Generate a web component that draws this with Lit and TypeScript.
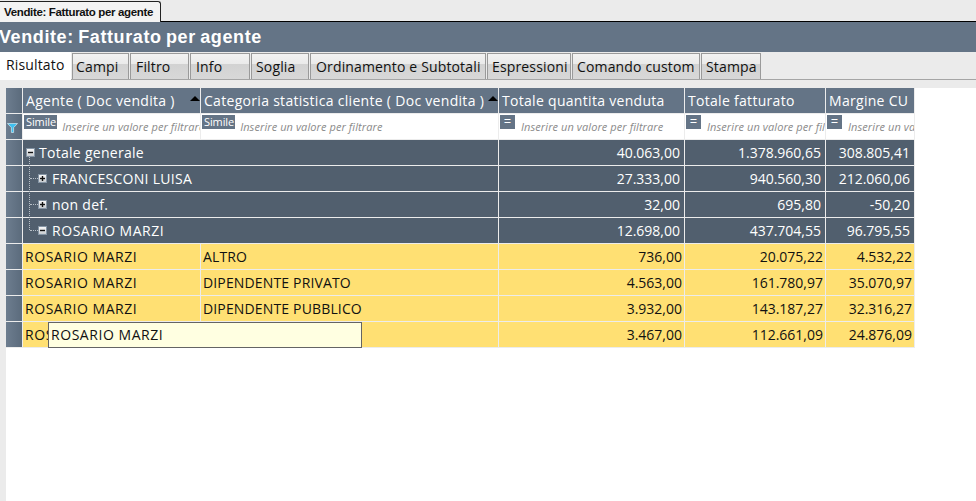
import { LitElement, html, css, svg } from "lit";
import { customElement } from "lit/decorators.js";

const tabs = [
  ["Campi", 57, 3], ["Filtro", 59, 5], ["Info", 60, 5], ["Soglia", 58, 4],
  ["Ordinamento e Subtotali", 176, 5], ["Espressioni", 84, 4], ["Comando custom", 128, 4], ["Stampa", 60, 4],
] as const;

const groups = [
  { level: 0, open: true, label: "Totale generale", v: ["40.063,00", "1.378.960,65", "308.805,41"] },
  { level: 1, open: false, label: "FRANCESCONI LUISA", v: ["27.333,00", "940.560,30", "212.060,06"] },
  { level: 1, open: false, label: "non def.", v: ["32,00", "695,80", "-50,20"] },
  { level: 1, open: true, label: "ROSARIO MARZI", v: ["12.698,00", "437.704,55", "96.795,55"], last: true },
];

const rows = [
  ["ROSARIO MARZI", "ALTRO", "736,00", "20.075,22", "4.532,22"],
  ["ROSARIO MARZI", "DIPENDENTE PRIVATO", "4.563,00", "161.780,97", "35.070,97"],
  ["ROSARIO MARZI", "DIPENDENTE PUBBLICO", "3.932,00", "143.187,27", "32.316,27"],
  ["ROSARIO MARZI", "", "3.467,00", "112.661,09", "24.876,09"],
];

@customElement("app-root")
export class AppRoot extends LitElement {
  static styles = css`
    :host { display: block; width: 976px; height: 501px; overflow: hidden; background: #ebebeb; font-family: "Open Sans", "Noto Sans", sans-serif; font-size: 14px; color: #111; }
    .doc-strip { height: 22px; box-sizing: border-box; border-bottom: 1px solid #000; padding-top: 1px; }
    .doc-tab { width: 161px; height: 21px; box-sizing: border-box; background: #f3f3f3; border: 1px solid #222; border-bottom: 0; border-left: 0; border-radius: 0 3px 0 0; font: bold 11.5px/21px "Liberation Sans", sans-serif; letter-spacing: -0.35px; padding-left: 4px; color: #111; white-space: nowrap; }
    .title { height: 30px; box-sizing: border-box; background: #647486; color: #fff; font: bold 18px/31px "Liberation Sans", sans-serif; letter-spacing: 0.6px; word-spacing: -1.2px; text-indent: -1px; white-space: nowrap; }
    .tabs { height: 28px; display: flex; gap: 1px; box-sizing: border-box; border-bottom: 1px solid #a5a5a5; }
    .tab { height: 26px; box-sizing: border-box; margin-top: 1px; border: 1px solid #9a9a9a; border-bottom: 0; white-space: nowrap; line-height: 25px; letter-spacing: 0.15px; color: #111; background: linear-gradient(#f2f2f2 0, #eaeaea 40%, #d2d2d2 42%, #d8d8d8 100%); }
    .tab.active { width: 71px; height: 28px; margin: 0; border: 0; background: #fff; padding-left: 6px; line-height: 26px; position: relative; z-index: 1; }
    .content { height: 421px; margin: 0 0 0 6px; box-sizing: border-box; border-top: 8px solid #ebebeb; background: #fff; position: relative; }
    .grid { display: inline-grid; grid-template-columns: 16px 177px 297px 185px 140px 88px; grid-auto-rows: 25px; gap: 1px; background: #ececec; padding: 0 1px 1px 0; }
    .cell { line-height: 25px; white-space: nowrap; overflow: hidden; padding: 0 3px; box-sizing: border-box; }
    .head { background: #647486; color: #fff; display: flex; align-items: center; justify-content: space-between; padding-left: 3px; padding-right: 0; letter-spacing: 0.3px; }
    .sort { width: 0; height: 0; border: 5px solid transparent; border-top: 0; border-bottom: 5px solid #000; flex: none; position: relative; top: -2px; }
    .sel { background: linear-gradient(90deg, #6d7d8f, #5b6b7c); display: flex; align-items: flex-start; justify-content: flex-start; }
    .funnel { margin: 9px 0 0 1px; }
    .fill { background: #fff; padding: 0; display: flex; align-items: flex-start; gap: 6px; overflow: hidden; }
    .fill.like { gap: 5px; }
    .op { flex: none; background: #647486; color: #fff; font-size: 11px; line-height: 13px; height: 14px; padding: 0 1px 0 2px; margin: 1px 0 0 1px; letter-spacing: -0.1px; }
    .op.eq { width: 15px; text-align: center; padding: 0; font-size: 13px; }
    .hint { font-style: italic; font-size: 11px; letter-spacing: 0.08px; color: #8a8a8a; line-height: 26px; white-space: nowrap; }
    .group { background: #515f6e; color: #fff; }
    .span2 { grid-column: span 2; display: flex; align-items: center; padding: 0; position: relative; overflow: visible; letter-spacing: 0.28px; }
    .num { text-align: right; padding-right: 2px; padding-left: 0; }
    .dark-num { padding-right: 4px; }
    .row { background: #ffe073; color: #111; padding-left: 2px; letter-spacing: 0.15px; }
    .row.num { letter-spacing: 0; }
    .wide { letter-spacing: 0.55px; }
    .exp { width: 9px; height: 9px; flex: none; background: linear-gradient(#f8f8f8, #c8ccd0); border: 1px solid #8595a5; box-sizing: border-box; display: block; position: relative; z-index: 1; }
    .exp svg { display: block; }
    .lbl { margin-left: 4px; }
    .l0 { padding-left: 3px; }
    .l1 { padding-left: 15px; }
    .l1 .lbl { margin-left: 5px; }
    .vline { position: absolute; left: 6px; width: 0; border-left: 1px dotted #b8c0c8; }
    .hline { position: absolute; left: 7px; top: 12px; width: 8px; border-top: 1px dotted #b8c0c8; }
    .tip { position: absolute; left: 42px; top: 234px; width: 314px; height: 26px; box-sizing: border-box; background: #ffffe1; border: 1px solid #646464; padding-left: 2px; line-height: 24px; color: #111; letter-spacing: 0.55px; }
  `;

  private expander(open: boolean) {
    return html`<span class="exp"><svg width="7" height="7" viewBox="0 0 7 7">
      ${svg`<path d="M1 3.5H6" stroke="#111" stroke-width="1.4"/>`}
      ${open ? "" : svg`<path d="M3.5 1V6" stroke="#111" stroke-width="1.4"/>`}
    </svg></span>`;
  }

  private funnel() {
    return html`<svg class="funnel" width="11" height="10" viewBox="0 0 11 10">
      <path d="M0.5 0.5H10.5L6.6 4.6V9.5H4.4V4.6Z" fill="#3fc0f0" stroke="#e8f6fc" stroke-width="0.6"/>
    </svg>`;
  }

  render() {
    return html`
      <div class="doc-strip"><div class="doc-tab">Vendite: Fatturato per agente</div></div>
      <div class="title">Vendite: Fatturato per agente</div>
      <div class="tabs">
        <div class="tab active">Risultato</div>
        ${tabs.map(([t, w, p]) => html`<div class="tab" style="width:${w}px;padding-left:${p}px">${t}</div>`)}
      </div>
      <div class="content">
        <div class="grid">
          <div class="sel"></div>
          <div class="cell head">Agente ( Doc vendita )<span class="sort"></span></div>
          <div class="cell head">Categoria statistica cliente ( Doc vendita )<span class="sort"></span></div>
          <div class="cell head">Totale quantita venduta</div>
          <div class="cell head">Totale fatturato</div>
          <div class="cell head">Margine CU</div>

          <div class="sel">${this.funnel()}</div>
          <div class="cell fill like"><span class="op">Simile</span><span class="hint">Inserire un valore per filtrare</span></div>
          <div class="cell fill like"><span class="op">Simile</span><span class="hint">Inserire un valore per filtrare</span></div>
          <div class="cell fill"><span class="op eq">=</span><span class="hint">Inserire un valore per filtrare</span></div>
          <div class="cell fill"><span class="op eq">=</span><span class="hint">Inserire un valore per filtrare</span></div>
          <div class="cell fill"><span class="op eq">=</span><span class="hint">Inserire un valore per filtrare</span></div>

          ${groups.map((g) => html`
            <div class="sel"></div>
            <div class="cell group span2 ${g.level ? "l1" : "l0"} ${g.last ? "wide" : ""}">
              ${g.level
                ? html`<span class="vline" style="top:-1px;height:${g.last ? 13 : 27}px"></span><span class="hline"></span>`
                : html`<span class="vline" style="top:17px;height:9px"></span>`}
              ${this.expander(g.open)}<span class="lbl">${g.label}</span>
            </div>
            ${g.v.map((v) => html`<div class="cell group num dark-num">${v}</div>`)}
          `)}

          ${rows.map((r) => html`
            <div class="sel"></div>
            ${r.map((c, i) => html`<div class="cell row ${i > 1 ? "num" : ""} ${i === 0 ? "wide" : ""}">${c}</div>`)}
          `)}
        </div>
        <div class="tip">ROSARIO MARZI</div>
      </div>
    `;
  }
}
